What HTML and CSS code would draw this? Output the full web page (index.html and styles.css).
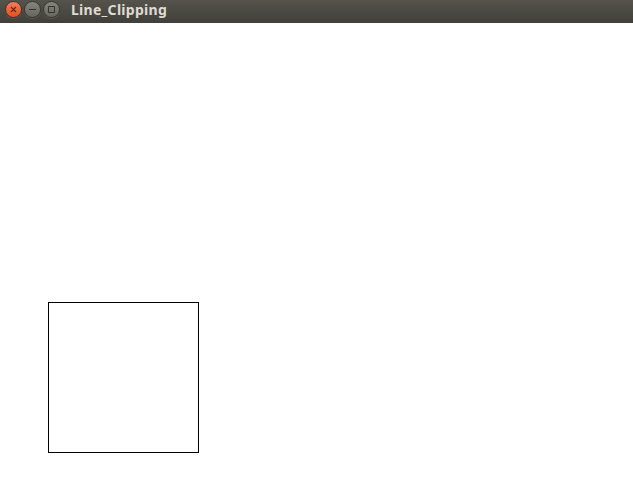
FILE: index.html
```html
<!DOCTYPE html>
<html lang="en">
<head>
<meta charset="utf-8">
<title>Line_Clipping</title>
<link rel="stylesheet" href="styles.css">
</head>
<body>
<div class="window">
  <header class="titlebar">
    <div class="controls">
      <span class="control close"><svg viewBox="0 0 15 15"><path d="M5 5l5 5M10 5l-5 5"/></svg></span>
      <span class="control"><svg viewBox="0 0 15 15"><path d="M4 7.5h7"/></svg></span>
      <span class="control"><svg viewBox="0 0 15 15"><path d="M4.5 4.5h6v6h-6z"/></svg></span>
    </div>
    <h1 class="title">Line_Clipping</h1>
  </header>
  <main class="canvas">
    <div class="clip-window"></div>
  </main>
</div>
</body>
</html>
```

FILE: styles.css
```css
* { box-sizing: border-box; }
body { margin: 0; background: #fff; }
.window {
  display: flex;
  flex-direction: column;
  height: 501px;
  overflow: hidden;
}
.titlebar {
  display: flex;
  flex: none;
  height: 23px;
  padding-left: 5px;
  background: linear-gradient(#55534b, #403f3a);
}
.controls {
  display: flex;
  gap: 2px;
  padding-top: 1px;
}
.control {
  width: 17px;
  height: 17px;
  border: 1px solid #373631;
  border-radius: 50%;
  background: linear-gradient(#85847d, #66655e);
  box-shadow: 0 1px 0 #5b5a53;
}
.close { background: linear-gradient(#f47d58, #e2501f); }
.control svg {
  display: block;
  width: 15px;
  height: 15px;
  fill: none;
  stroke: #33322d;
  stroke-width: 1;
}
.close svg { stroke: #5e2813; stroke-width: 1.1; }
.title {
  margin: 0 0 0 11px;
  font: 700 14px/20px "Noto Sans", "Open Sans", sans-serif;
  letter-spacing: 0.28px;
  color: #dfdbd2;
  white-space: nowrap;
}
.canvas {
  flex: 1;
  padding: 279px 0 0 48px;
  background: #fff;
}
.clip-window {
  width: 151px;
  height: 151px;
  border: 1px solid #000;
}
```
